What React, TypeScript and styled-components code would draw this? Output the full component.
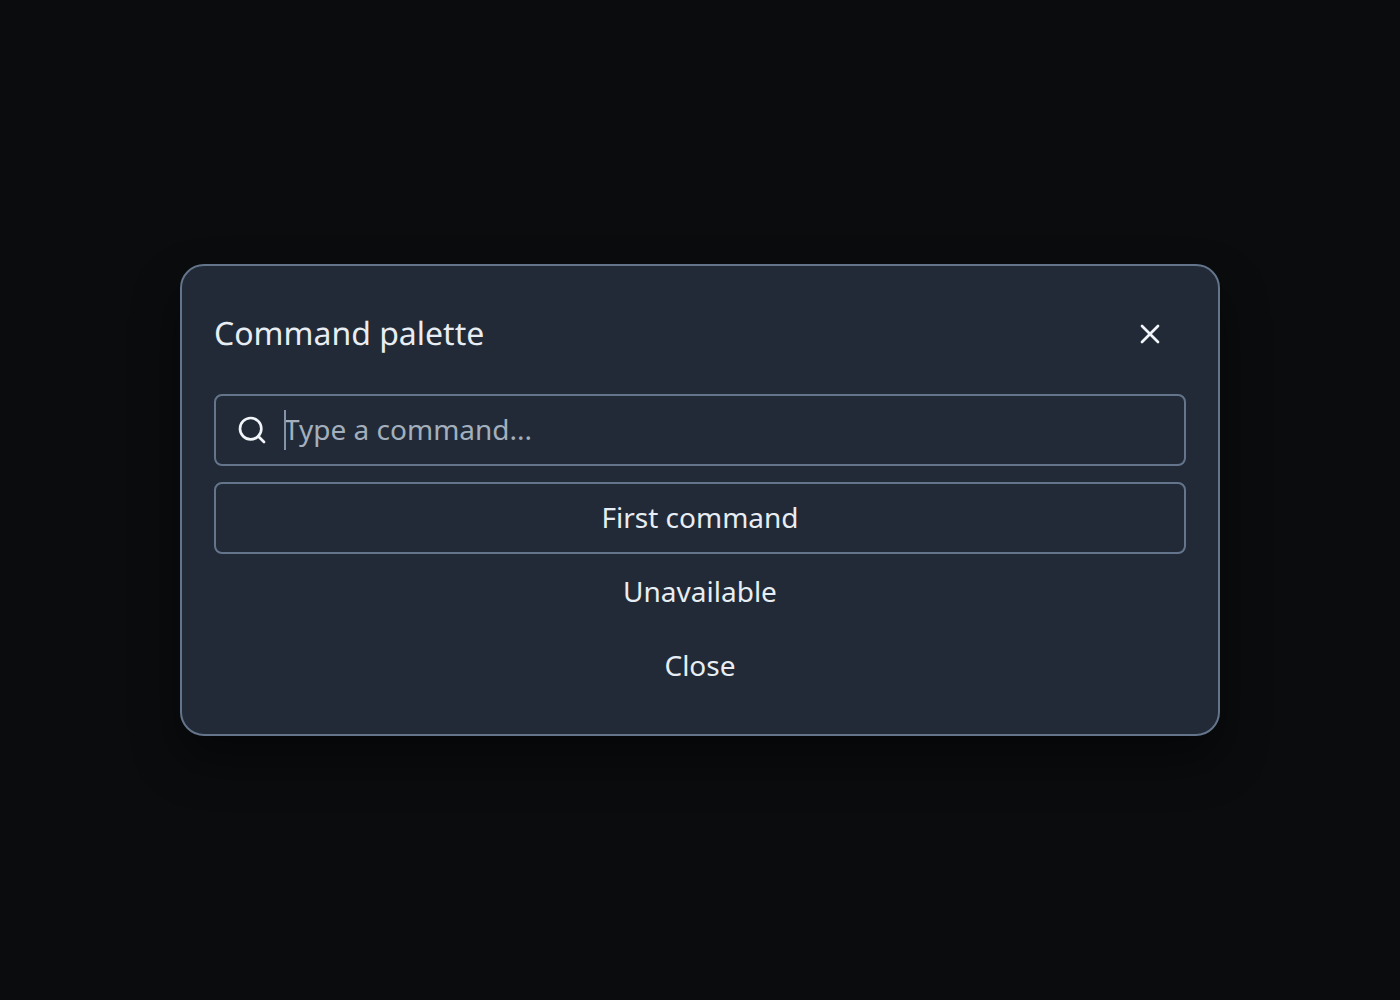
import styled, { createGlobalStyle } from 'styled-components';
import { Search, X } from 'lucide-react';

const GlobalStyle = createGlobalStyle`
  html, body {
    margin: 0;
    padding: 0;
    background: #0a0c0e;
  }

  * {
    box-sizing: border-box;
  }

  body {
    font-family: "Noto Sans", sans-serif;
    text-rendering: geometricPrecision;
  }
`;

const Overlay = styled.div`
  width: 100%;
  height: 1000px;
  display: flex;
  align-items: center;
  justify-content: center;
  background: #0a0c0e;
`;

const Dialog = styled.div`
  width: 1040px;
  padding: 32px;
  display: flex;
  flex-direction: column;
  background: #212a36;
  border: 2px solid #64748b;
  border-radius: 24px;
  box-shadow: 0 24px 48px rgb(0 0 0 / 45%);
`;

const Header = styled.div`
  display: flex;
  align-items: center;
  justify-content: space-between;
  margin-bottom: 24px;
`;

const Title = styled.h2`
  margin: 0;
  font-size: 32px;
  line-height: 44px;
  font-weight: 400;
  color: #e8edf3;
`;

const IconButton = styled.button`
  width: 72px;
  height: 72px;
  padding: 0;
  display: flex;
  align-items: center;
  justify-content: center;
  background: transparent;
  border: 0;
  color: #f1f5f9;
`;

const SearchBox = styled.label`
  position: relative;
  height: 72px;
  padding: 0 20px;
  display: flex;
  align-items: center;
  gap: 16px;
  border: 2px solid #64748b;
  border-radius: 8px;
  color: #f1f5f9;
  margin-bottom: 16px;
`;

const SearchInput = styled.input`
  flex: 1;
  height: 40px;
  padding: 0 0 2px;
  background: transparent;
  border: 0;
  outline: 0;
  font: inherit;
  font-size: 28px;
  color: #e8edf3;

  &::placeholder {
    color: #a3afbd;
    opacity: 1;
  }
`;

const Caret = styled.span`
  position: absolute;
  left: 68px;
  top: 14px;
  width: 2px;
  height: 40px;
  background: #8493a8;
`;

const CommandList = styled.div`
  display: flex;
  flex-direction: column;
  gap: 2px;
`;

const CommandButton = styled.button<{ $selected?: boolean }>`
  height: 72px;
  padding: 0 0 2px;
  background: transparent;
  border: 2px solid ${(p) => (p.$selected ? '#64748b' : 'transparent')};
  border-radius: 8px;
  font: inherit;
  font-size: 28px;
  color: #e8edf3;
`;

const App = () => {
  return (
    <>
      <GlobalStyle />
      <Overlay>
        <Dialog>
          <Header>
            <Title>Command palette</Title>
            <IconButton aria-label="Close">
              <X size={32} strokeWidth={2} />
            </IconButton>
          </Header>
          <SearchBox>
            <Search size={32} strokeWidth={2} />
            <SearchInput placeholder="Type a command..." />
            <Caret />
          </SearchBox>
          <CommandList>
            <CommandButton $selected>First command</CommandButton>
            <CommandButton>Unavailable</CommandButton>
            <CommandButton>Close</CommandButton>
          </CommandList>
        </Dialog>
      </Overlay>
    </>
  );
};

export default App;
